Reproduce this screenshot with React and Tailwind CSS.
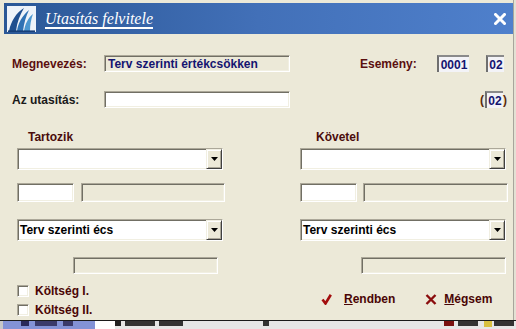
import React from "react";

const sunk =
  "border border-t-[#aca899] border-l-[#aca899] border-r-white border-b-white shadow-[inset_1px_1px_0_#716f64,inset_-1px_-1px_0_#f1efe2]";
const raised =
  "border border-t-[#f1efe2] border-l-[#f1efe2] border-r-[#404040] border-b-[#404040] shadow-[inset_1px_1px_0_#ffffff,inset_-1px_-1px_0_#aca899]";

function GrayBox({ className = "", children }) {
  return (
    <div className={`${sunk} bg-[#ece9d8] flex items-center ${className}`}>{children}</div>
  );
}

function WhiteBox({ className = "" }) {
  return <div className={`${sunk} bg-white ${className}`} />;
}

function NumBox({ className = "", children }) {
  return (
    <div
      className={`border-t-2 border-l-2 border-t-[#8a8a8a] border-l-[#6f6f6f] bg-[#f3f3f7] flex items-center justify-center text-[#141470] text-[12px] font-bold leading-none ${className}`}
    >
      {children}
    </div>
  );
}

function Combo({ className = "", text }) {
  return (
    <div className={`${sunk} bg-white flex items-stretch h-[22px] ${className}`}>
      <div className="flex-1 flex items-center pl-[2px] text-[12px] font-bold text-black leading-none">
        {text}
      </div>
      <div className={`${raised} w-[16px] bg-[#ece9d8] flex items-center justify-center`}>
        <svg width="7" height="4" viewBox="0 0 7 4">
          <path d="M0 0H7L3.5 4Z" fill="#000" />
        </svg>
      </div>
    </div>
  );
}

function Logo() {
  return (
    <svg width="29" height="26" viewBox="0 0 29 26" className="shrink-0">
      <rect x="0" y="0" width="29" height="26" fill="#eef3f9" />
      <path d="M2 25 C4 15 9 7 17 2 C13 9 10 16 9 25 Z" fill="#1f4f8f" />
      <path d="M10 25 C11 17 15 10 22 4 C19 10 17 17 16 25 Z" fill="#2f72b4" />
      <path d="M17 25 C18 18 21 12 26 8 C24 13 23 19 23 25 Z" fill="#4c98d0" />
      <path d="M1 25.2 H28" stroke="#173f78" strokeWidth="1.6" />
    </svg>
  );
}

export default function App() {
  return (
    <div className="w-[516px] h-[329px] overflow-hidden bg-[#ece9d8] flex flex-col font-['Liberation_Sans',Arial,sans-serif]">
      <div className="flex flex-1 min-h-0">
        <div className="w-[513px] flex flex-col">
          {/* Title bar */}
          <div className="mt-[3px] ml-[4px] h-[31px] bg-linear-to-r from-[#2a5796] via-[#4270b8] to-[#4f80cc] flex items-center relative">
            <div className="ml-[3px]">
              <Logo />
            </div>
            <div className="ml-[9px] text-white italic text-[16px] leading-none font-['Liberation_Serif',serif] underline underline-offset-[3px] decoration-[1.5px] mt-[1px]">
              Utasítás felvitele
            </div>
            <div className="ml-auto mr-[7px]">
              <svg width="12" height="12" viewBox="0 0 12 12">
                <path d="M1.5 1.5L10.5 10.5M10.5 1.5L1.5 10.5" stroke="#fff" strokeWidth="3" strokeLinecap="square" />
              </svg>
            </div>
          </div>

          {/* Row 1 */}
          <div className="mt-[21px] h-[17px] flex items-center text-[12px] font-bold leading-none">
            <div className="ml-[12px] w-[92px] text-[#5a0f0f]">Megnevezés:</div>
            <GrayBox className="w-[186px] h-[17px] pl-[3px] text-[#141470]">Terv szerinti értékcsökken</GrayBox>
            <div className="ml-[70px] w-[77px] text-[#5a0f0f]">Esemény:</div>
            <NumBox className="w-[32px] h-[17px]">0001</NumBox>
            <NumBox className="ml-[17px] w-[18px] h-[17px]">02</NumBox>
          </div>

          {/* Row 2 */}
          <div className="mt-[19px] h-[17px] flex items-center text-[12px] font-bold leading-none">
            <div className="ml-[12px] w-[92px] text-[#1a1a1a]">Az utasítás:</div>
            <WhiteBox className="w-[186px] h-[17px]" />
            <div className="ml-[190px] w-[5px] text-[#5a2a0a]">(</div>
            <NumBox className="w-[18px] h-[17px]">02</NumBox>
            <div className="text-[#5a2a0a]">)</div>
          </div>

          {/* Labels */}
          <div className="mt-[22px] h-[14px] flex items-center text-[12px] font-bold leading-none text-[#4a0c0c]">
            <div className="ml-[28px] w-[288px]">Tartozik</div>
            <div>Követel</div>
          </div>

          {/* Combo 1 */}
          <div className="mt-[4px] flex">
            <Combo className="ml-[17px] w-[206px]" />
            <Combo className="ml-[77px] w-[206px]" />
          </div>

          {/* Small inputs */}
          <div className="mt-[13px] h-[19px] flex">
            <WhiteBox className="ml-[17px] w-[57px] h-[19px]" />
            <GrayBox className="ml-[7px] w-[144px] h-[19px]" />
            <WhiteBox className="ml-[75px] w-[57px] h-[19px]" />
            <GrayBox className="ml-[6px] w-[145px] h-[19px]" />
          </div>

          {/* Combo 2 */}
          <div className="mt-[17px] flex">
            <Combo className="ml-[17px] w-[206px]" text="Terv szerinti écs" />
            <Combo className="ml-[77px] w-[206px]" text="Terv szerinti écs" />
          </div>

          {/* Gray boxes */}
          <div className="mt-[16px] h-[17px] flex">
            <GrayBox className="ml-[73px] w-[145px] h-[17px]" />
            <GrayBox className="ml-[143px] w-[145px] h-[17px]" />
          </div>

          {/* Bottom area */}
          <div className="mt-[11px] flex">
            <div className="ml-[17px] w-[300px] flex flex-col gap-[7px] text-[12px] font-bold leading-none text-[#4a0505]">
              <div className="h-[12px] flex items-center">
                <div className={`${sunk} bg-white w-[12px] h-[12px]`} />
                <span className="ml-[6px]">Költség I.</span>
              </div>
              <div className="h-[12px] flex items-center">
                <div className={`${sunk} bg-white w-[12px] h-[12px]`} />
                <span className="ml-[6px]">Költség II.</span>
              </div>
            </div>
            <div className="mt-[7px] h-[14px] flex items-center text-[12px] font-bold leading-none text-[#4a0505]">
              <svg width="11" height="11" viewBox="0 0 11 11" className="ml-[4px]">
                <path d="M1.5 5.5L4.5 9.5L9.8 0.8" stroke="#a30d0d" strokeWidth="2.6" fill="none" />
              </svg>
              <span className="ml-[12px]">
                <span className="underline">R</span>endben
              </span>
              <svg width="12" height="11" viewBox="0 0 12 11" className="ml-[30px]">
                <path d="M1.5 1L10.5 10M10.5 1L1.5 10" stroke="#8a0d0d" strokeWidth="2.4" />
              </svg>
              <span className="ml-[7px]">
                <span className="underline">M</span>égsem
              </span>
            </div>
          </div>
        </div>
        <div className="w-[3px] border-l border-l-[#a8a69c] bg-[#e4e1d4]" />
      </div>

      {/* Bottom strip */}
      <div className="h-[9px] border-t border-t-[#1a1a1a] flex bg-[#e6e6e6]">
        <div className="w-[3px] bg-[#c8c8c8]" />
        <div className="w-[92px] bg-[#8392d6] flex items-start gap-[6px] pl-[18px]">
          <div className="w-[8px] h-[5px] bg-[#2a2a5a]" />
          <div className="w-[22px] h-[5px] bg-[#3a3a6a]" />
          <div className="w-[10px] h-[5px] bg-[#3a3a6a]" />
        </div>
        <div className="w-[20px] bg-white" />
        <div className="flex items-start gap-[4px]">
          <div className="w-[6px] h-[5px] bg-[#222]" />
          <div className="w-[30px] h-[5px] bg-[#333]" />
          <div className="w-[24px] h-[5px] bg-[#333]" />
        </div>
        <div className="ml-[80px] w-[6px] h-[5px] bg-[#333]" />
        <div className="ml-[175px] w-[10px] h-[5px] bg-[#7a1010]" />
        <div className="ml-[4px] w-[20px] h-[5px] bg-[#333]" />
        <div className="ml-[6px] w-[8px] h-[6px] bg-[#d8c040]" />
        <div className="ml-[2px] w-[20px] h-[5px] bg-[#333]" />
      </div>
    </div>
  );
}
